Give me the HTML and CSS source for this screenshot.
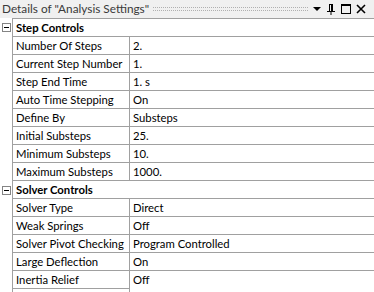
FILE: index.html
```html
<!DOCTYPE html>
<html>
<head>
<meta charset="utf-8">
<link rel="stylesheet" href="styles.css">
</head>
<body>
<div class="panel">
  <div class="titlebar">
    <span class="title">Details of "Analysis Settings"</span>
    <span class="grip"></span>
    <span class="tools">
      <svg class="ic" width="10" height="10" viewBox="0 0 10 10"><path d="M1 3h8L5 7z" fill="#000"/></svg>
      <svg class="ic" width="12" height="12" viewBox="0 0 12 12"><path d="M4 1.5h4M4.5 1.5v6.5M7.5 1.5v6.5" stroke="#000" stroke-width="1" fill="none"/><rect x="2" y="8" width="8" height="1" fill="#000"/><rect x="5.5" y="9" width="1" height="3" fill="#000"/><rect x="6" y="2" width="1.5" height="6" fill="#000"/></svg>
      <svg class="ic" width="12" height="12" viewBox="0 0 12 12"><rect x="1.5" y="1.5" width="9" height="9" fill="none" stroke="#000" stroke-width="1"/><rect x="1" y="1" width="10" height="2" fill="#000"/></svg>
      <svg class="ic" width="12" height="12" viewBox="0 0 12 12"><path d="M2 2L10 10M10 2L2 10" stroke="#000" stroke-width="1.6" fill="none"/></svg>
    </span>
  </div>
  <div class="grid">
    <div class="row group first"><div class="gut"><span class="minus"></span></div><div class="cells"><div class="glab">Step Controls</div></div></div>
    <div class="row"><div class="gut"></div><div class="cells"><div class="lab">Number Of Steps</div><div class="val">2.</div></div></div>
    <div class="row"><div class="gut"></div><div class="cells"><div class="lab">Current Step Number</div><div class="val">1.</div></div></div>
    <div class="row"><div class="gut"></div><div class="cells"><div class="lab">Step End Time</div><div class="val">1. s</div></div></div>
    <div class="row"><div class="gut"></div><div class="cells"><div class="lab">Auto Time Stepping</div><div class="val">On</div></div></div>
    <div class="row"><div class="gut"></div><div class="cells"><div class="lab">Define By</div><div class="val">Substeps</div></div></div>
    <div class="row"><div class="gut"></div><div class="cells"><div class="lab">Initial Substeps</div><div class="val">25.</div></div></div>
    <div class="row"><div class="gut"></div><div class="cells"><div class="lab">Minimum Substeps</div><div class="val">10.</div></div></div>
    <div class="row"><div class="gut"></div><div class="cells"><div class="lab">Maximum Substeps</div><div class="val">1000.</div></div></div>
    <div class="row group"><div class="gut"><span class="minus"></span></div><div class="cells"><div class="glab">Solver Controls</div></div></div>
    <div class="row"><div class="gut"></div><div class="cells"><div class="lab">Solver Type</div><div class="val">Direct</div></div></div>
    <div class="row"><div class="gut"></div><div class="cells"><div class="lab">Weak Springs</div><div class="val">Off</div></div></div>
    <div class="row"><div class="gut"></div><div class="cells"><div class="lab">Solver Pivot Checking</div><div class="val">Program Controlled</div></div></div>
    <div class="row"><div class="gut"></div><div class="cells"><div class="lab">Large Deflection</div><div class="val">On</div></div></div>
    <div class="row last"><div class="gut"></div><div class="cells"><div class="lab">Inertia Relief</div><div class="val">Off</div></div></div>
    <div class="row end"><div class="gut"></div><div class="cells"><div class="lab"></div><div class="val"></div></div></div>
  </div>
</div>
</body>
</html>
```
FILE: styles.css
```css
html, body {
  margin: 0;
  padding: 0;
  background: #fff;
}
body {
  font-family: Lato, "Noto Sans", sans-serif;
  font-size: 11.3px;
  color: #000;
  width: 374px;
  height: 292px;
  overflow: hidden;
}
.panel {
  display: flex;
  flex-direction: column;
  height: 292px;
}
.titlebar {
  height: 18px;
  flex: none;
  background: #f0f0f0;
  display: flex;
  align-items: center;
  padding-left: 2px;
  box-sizing: border-box;
}
.title {
  color: #3a3a3a;
  font-size: 11.8px;
  line-height: 18px;
  white-space: nowrap;
}
.grip {
  flex: 1;
  height: 2px;
  margin: 0 4px 0 4px;
  border-top: 1px dotted #b0b0b0;
  border-bottom: 1px dotted #b0b0b0;
}
.tools {
  display: flex;
  align-items: center;
  gap: 3px;
  padding-right: 7px;
}
.ic {
  display: block;
}
.grid {
  flex: 1;
  display: flex;
  flex-direction: column;
}
.row {
  display: flex;
  height: 18px;
  flex: none;
}
.row.first {
  height: 19px;
}
.gut {
  width: 12px;
  flex: none;
  display: flex;
  align-items: center;
  justify-content: flex-start;
}
.minus {
  width: 9px;
  height: 9px;
  box-sizing: border-box;
  border: 1px solid #848484;
  margin-left: 2px;
  background: #fff;
  position: relative;
}
.minus::after {
  content: "";
  position: absolute;
  left: 1px;
  top: 3px;
  width: 5px;
  height: 1px;
  background: #000;
}
.cells {
  flex: 1;
  display: flex;
  border-left: 1px solid #a0a0a0;
  border-bottom: 1px solid #a0a0a0;
}
.row.first .cells {
  border-top: 1px solid #a0a0a0;
}
.lab {
  width: 117px;
  flex: none;
  box-sizing: border-box;
  border-right: 1px solid #a0a0a0;
  padding-left: 3px;
  line-height: 17px;
  white-space: nowrap;
  overflow: hidden;
}
.val {
  flex: 1;
  padding-left: 3px;
  line-height: 17px;
  white-space: nowrap;
}
.glab {
  padding-left: 3px;
  font-weight: bold;
  line-height: 17px;
}
.row.last .cells {
  border-bottom: none;
}
.row.last .lab {
  border-bottom: 1px solid #a0a0a0;
}
.row.end {
  flex: 1;
}
.row.end .cells {
  border-bottom: none;
}
```
